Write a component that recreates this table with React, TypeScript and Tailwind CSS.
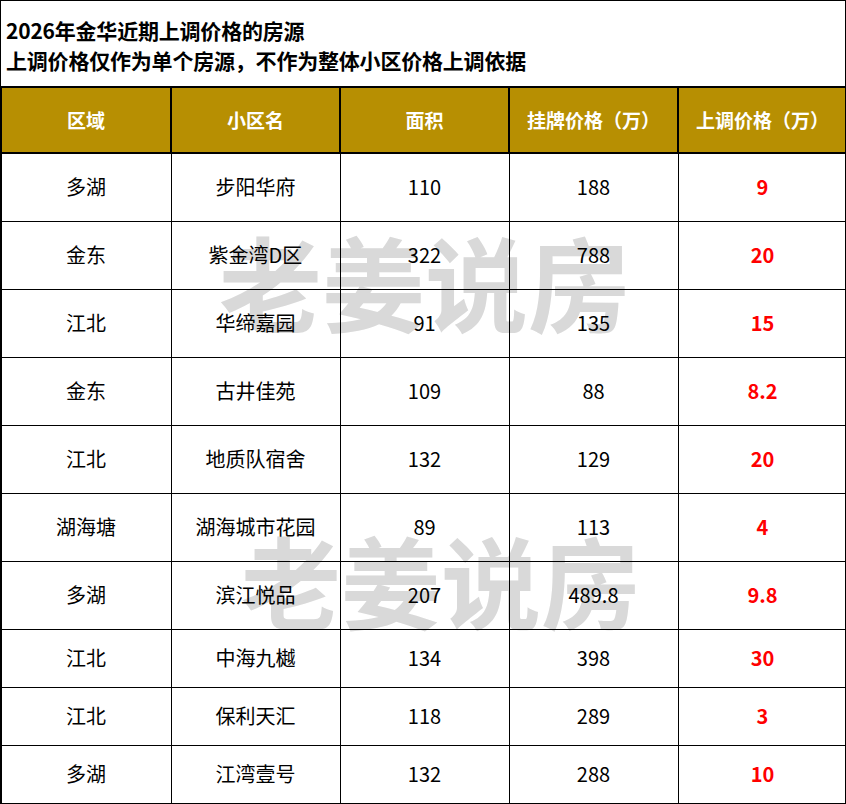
const rows = [
  { area: "多湖", name: "步阳华府", size: "110", price: "188", up: "9" },
  { area: "金东", name: "紫金湾D区", size: "322", price: "788", up: "20" },
  { area: "江北", name: "华缔嘉园", size: "91", price: "135", up: "15" },
  { area: "金东", name: "古井佳苑", size: "109", price: "88", up: "8.2" },
  { area: "江北", name: "地质队宿舍", size: "132", price: "129", up: "20" },
  { area: "湖海塘", name: "湖海城市花园", size: "89", price: "113", up: "4" },
  { area: "多湖", name: "滨江悦品", size: "207", price: "489.8", up: "9.8" },
  { area: "江北", name: "中海九樾", size: "134", price: "398", up: "30" },
  { area: "江北", name: "保利天汇", size: "118", price: "289", up: "3" },
  { area: "多湖", name: "江湾壹号", size: "132", price: "288", up: "10" },
];

const headers = ["区域", "小区名", "面积", "挂牌价格（万）", "上调价格（万）"];

export default function App() {
  return (
    <div
      className="relative w-[846px] h-[804px] bg-white text-black border border-black overflow-hidden"
      style={{ fontFamily: '"Noto Sans CJK SC", "Noto Sans", sans-serif' }}
    >
      <div className="h-[85px] px-[5px] pt-[14px] flex flex-col justify-start font-bold text-[21px] leading-[30px] tracking-[-0.2px]">
        <div>2026年金华近期上调价格的房源</div>
        <div>上调价格仅作为单个房源，不作为整体小区价格上调依据</div>
      </div>

      <div className="pointer-events-none absolute left-[218px] top-[220px] font-bold text-[103px] leading-[120px] text-[#d9d9d9]">
        老姜说房
      </div>
      <div className="pointer-events-none absolute left-[240px] top-[518px] font-bold text-[100px] leading-[120px] text-[#d9d9d9]">
        老姜说房
      </div>

      <table className="relative z-10 w-[846px] -ml-px border-collapse table-fixed">
        <colgroup>
          <col className="w-[170px]" />
          <col className="w-[169px]" />
          <col className="w-[169px]" />
          <col className="w-[169px]" />
          <col className="w-[169px]" />
        </colgroup>
        <thead>
          <tr className="h-[66px] bg-[#b78f02]">
            {headers.map((h) => (
              <th
                key={h}
                className="border-2 border-black text-white font-bold text-[19px] text-center p-0"
              >
                {h}
              </th>
            ))}
          </tr>
        </thead>
        <tbody>
          {rows.map((r, i) => (
            <tr key={i} className={i < 7 ? "h-[68px]" : "h-[58px]"}>
              <td className="border border-black text-center text-[20px] p-0">{r.area}</td>
              <td className="border border-black text-center text-[20px] p-0">{r.name}</td>
              <td className="border border-black text-center text-[20px] p-0">{r.size}</td>
              <td className="border border-black text-center text-[20px] p-0">{r.price}</td>
              <td className="border border-black text-center text-[20px] font-bold text-[#ff0000] p-0">
                {r.up}
              </td>
            </tr>
          ))}
        </tbody>
      </table>
    </div>
  );
}
